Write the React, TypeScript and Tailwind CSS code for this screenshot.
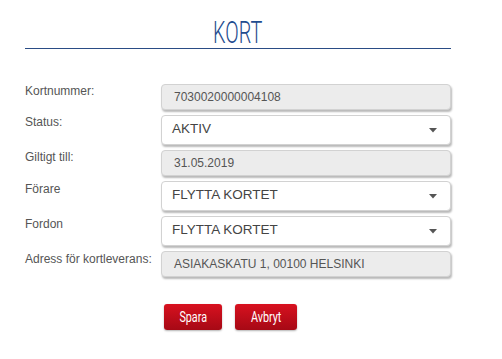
import React from "react";

const labelCls = "text-[12px] leading-[14px] text-[#555]";
const boxShadow = "shadow-[1px_2px_2px_rgba(0,0,0,0.28)]";

const ReadOnly = ({ value }: { value: string }) => (
  <div
    className={`h-[26px] flex items-center pl-[12px] rounded-[4px] border border-[#d2d2d2] bg-[#ececec] text-[12px] text-[#555] ${boxShadow}`}
  >
    {value}
  </div>
);

const Select = ({ value }: { value: string }) => (
  <div
    className={`h-[30px] flex items-center justify-between pl-[10px] pr-[13px] pb-[2px] rounded-[4px] border border-[#d2d2d2] bg-white text-[13.5px] text-[#444] ${boxShadow}`}
  >
    <span>{value}</span>
    <svg width="8" height="5" viewBox="0 0 8 5" className="mt-[3px]">
      <path d="M0 0 H8 L4 4.5 Z" fill="#555" />
    </svg>
  </div>
);

const App = () => {
  return (
    <div
      className="w-[502px] h-[359px] bg-white px-[25px]"
      style={{ fontFamily: '"Liberation Sans", Arial, sans-serif' }}
    >
      <div className="mr-[26px]">
        <div className="pt-[17px] h-[48px] text-center">
          <span
            className="inline-block h-[31px] leading-[31px] text-[32px] font-light text-[#1f4d8f] scale-x-[0.62]"
            style={{ fontFamily: 'Roboto, "Liberation Sans", sans-serif' }}
          >
            KORT
          </span>
        </div>
        <div className="h-px bg-[#2a4c85]" />
      </div>

      <div className="mt-[35px] grid grid-cols-[136px_290px] gap-y-[5px] items-start">
        <div className={labelCls}>Kortnummer:</div>
        <ReadOnly value="7030020000004108" />

        <div className={labelCls}>Status:</div>
        <Select value="AKTIV" />

        <div className={labelCls}>Giltigt till:</div>
        <ReadOnly value="31.05.2019" />

        <div className={`${labelCls} pt-[1px]`}>Förare</div>
        <Select value="FLYTTA KORTET" />

        <div className={`${labelCls} pt-[1px]`}>Fordon</div>
        <Select value="FLYTTA KORTET" />

        <div className={`${labelCls} pt-[1px]`}>Adress för kortleverans:</div>
        <ReadOnly value="ASIAKASKATU 1, 00100 HELSINKI" />
      </div>

      <div className="mt-[27px] pl-[139px] flex gap-[13px]">
        {[
          ["Spara", "w-[58px]"],
          ["Avbryt", "w-[62px]"],
        ].map(([t, w]) => (
          <button
            key={t}
            className={`${w} h-[26px] rounded-[3px] bg-gradient-to-b from-[#d8111f] to-[#a60915] shadow-[0_1px_2px_rgba(0,0,0,0.3)] flex items-center justify-center`}
          >
            <span
              className="inline-block text-[15px] font-normal text-white scale-x-[0.72]"
              style={{ fontFamily: 'Roboto, "Liberation Sans", sans-serif' }}
            >
              {t}
            </span>
          </button>
        ))}
      </div>
    </div>
  );
};

export default App;
